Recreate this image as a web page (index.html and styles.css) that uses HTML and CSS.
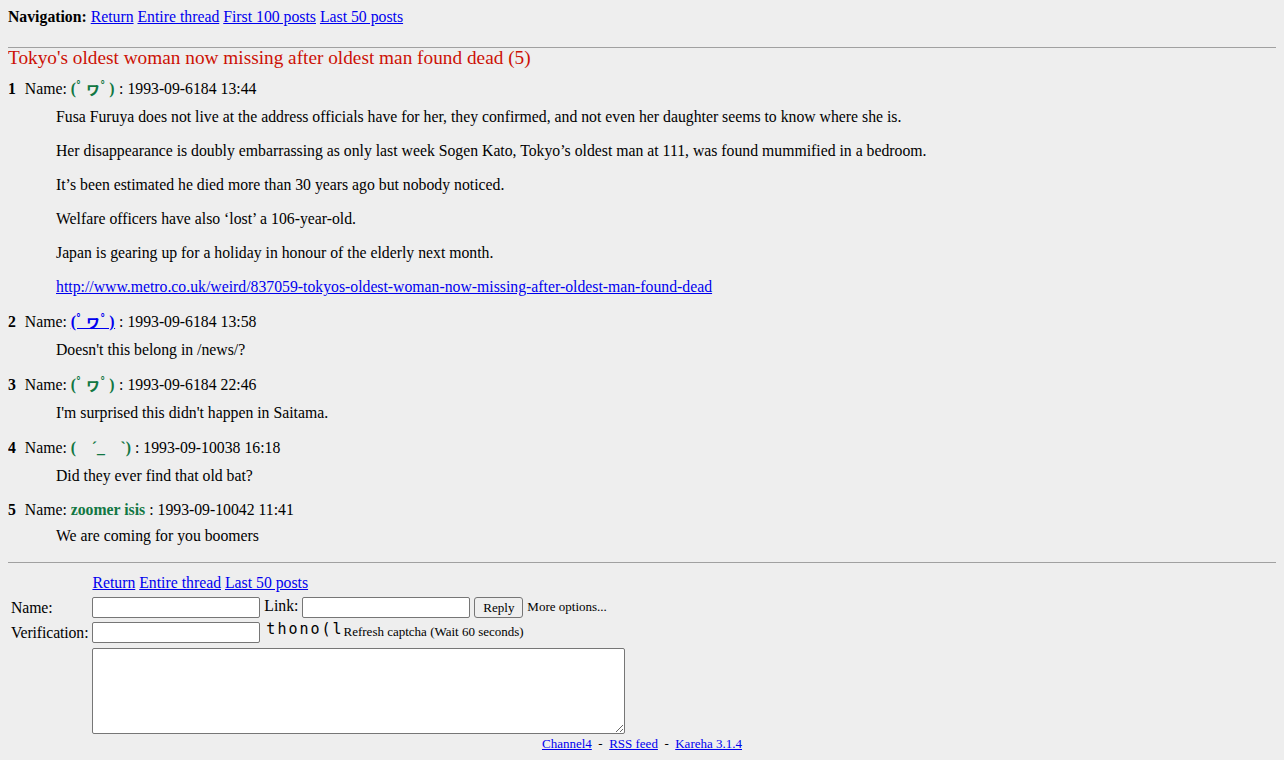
FILE: index.html
```html
<!DOCTYPE html>
<html lang="en">
<head>
    <meta charset="UTF-8">
    <title>Tokyo's oldest woman now missing after oldest man found dead</title>
    <link rel="stylesheet" href="styles.css">
</head>
<body>
    <div class="navigation">
        <strong>Navigation:</strong>
        <a href="#">Return</a>
        <a href="#">Entire thread</a>
        <a href="#">First 100 posts</a>
        <a href="#">Last 50 posts</a>
    </div>

    <hr>

    <div class="thread">
        <h2>Tokyo's oldest woman now missing after oldest man found dead <span class="replies">(5)</span></h2>

        <div class="reply">
            <h3><span class="replynum">1</span> Name: <span class="postername kao">(ﾟヮﾟ)</span> : 1993-09-6184 13:44</h3>
            <div class="replytext">
                <p>Fusa Furuya does not live at the address officials have for her, they confirmed, and not even her daughter seems to know where she is.</p>
                <p>Her disappearance is doubly embarrassing as only last week Sogen Kato, Tokyo’s oldest man at 111, was found mummified in a bedroom.</p>
                <p>It’s been estimated he died more than 30 years ago but nobody noticed.</p>
                <p>Welfare officers have also ‘lost’ a 106-year-old.</p>
                <p>Japan is gearing up for a holiday in honour of the elderly next month.</p>
                <p><a href="#">http://www.metro.co.uk/weird/837059-tokyos-oldest-woman-now-missing-after-oldest-man-found-dead</a></p>
            </div>
        </div>

        <div class="reply">
            <h3><span class="replynum">2</span> Name: <a class="postername linked kao" href="#">(ﾟヮﾟ)</a> : 1993-09-6184 13:58</h3>
            <div class="replytext">
                <p>Doesn't this belong in /news/?</p>
            </div>
        </div>

        <div class="reply">
            <h3><span class="replynum">3</span> Name: <span class="postername kao">(ﾟヮﾟ)</span> : 1993-09-6184 22:46</h3>
            <div class="replytext">
                <p>I'm surprised this didn't happen in Saitama.</p>
            </div>
        </div>

        <div class="reply">
            <h3><span class="replynum">4</span> Name: <span class="postername">(　´_　`)</span> : 1993-09-10038 16:18</h3>
            <div class="replytext">
                <p>Did they ever find that old bat?</p>
            </div>
        </div>

        <div class="reply last">
            <h3><span class="replynum">5</span> Name: <span class="postername">zoomer isis</span> : 1993-09-10042 11:41</h3>
            <div class="replytext">
                <p>We are coming for you boomers</p>
            </div>
        </div>
    </div>

    <hr>

    <form class="postform">
        <table>
            <tr class="links">
                <td></td>
                <td>
                    <a href="#">Return</a>
                    <a href="#">Entire thread</a>
                    <a href="#">Last 50 posts</a>
                </td>
            </tr>
            <tr>
                <td class="label">Name:</td>
                <td>
                    <input type="text" class="field">
                    Link:
                    <input type="text" class="field">
                    <input type="button" class="submit" value="Reply">
                    <small>More options...</small>
                </td>
            </tr>
            <tr>
                <td class="label">Verification:</td>
                <td>
                    <input type="text" class="field">
                    <span class="captcha">thono(l</span>
                    <small>Refresh captcha (Wait 60 seconds)</small>
                </td>
            </tr>
            <tr class="textrow">
                <td></td>
                <td><textarea class="comment"></textarea></td>
            </tr>
        </table>
    </form>

    <div class="footer">
        <a href="#">Channel4</a> &nbsp;-&nbsp;
        <a href="#">RSS feed</a> &nbsp;-&nbsp;
        <a href="#">Kareha 3.1.4</a>
    </div>
</body>
</html>
```

FILE: styles.css
```css
body {
    margin: 8px;
    background: #eeeeee;
    color: #000000;
    font-family: "Liberation Serif", "Noto Sans CJK JP", serif;
    font-size: 15.75px;
    line-height: 18px;
}

a {
    color: #0000ee;
}

hr {
    height: 0;
    border: 0;
    border-top: 1px solid #a0a0a0;
    margin: 21px 0 0 0;
}

.thread h2 {
    color: #cc1105;
    font-size: 19.3px;
    font-weight: normal;
    line-height: 20px;
    margin: 0 0 12px 0;
}

.reply {
    margin-bottom: 17px;
}

.reply.last {
    margin-top: -1px;
    margin-bottom: 0;
}

.reply h3 {
    font-size: 15.75px;
    font-weight: normal;
    margin: 0 0 10px 0;
}

.reply.last h3 {
    margin-bottom: 8px;
}

.replynum {
    font-weight: bold;
    margin-right: 5px;
}

.postername {
    color: #117743;
    font-weight: bold;
}

.postername.linked {
    color: #0000ee;
}

.kao {
    letter-spacing: 0.6px;
}

.replytext {
    margin-left: 48px;
}

.replytext p {
    margin: 0 0 16px 0;
}

.replytext p:last-child {
    margin-bottom: 0;
}

.thread + hr {
    margin-top: 17px;
}

.postform table {
    margin-top: 8px;
    border-spacing: 2px;
}

.postform td {
    padding: 1px;
    vertical-align: middle;
}

.postform .links td {
    padding-bottom: 2px;
}

.postform .textrow td {
    padding-top: 2px;
}

.postform .label {
    letter-spacing: -0.1px;
}

.postform small {
    font-size: 13px;
}

.field {
    box-sizing: border-box;
    width: 168px;
    height: 21px;
    font-size: 13px;
    border: 1px solid #767676;
    border-radius: 2px;
    background: #ffffff;
    vertical-align: middle;
}

.submit {
    font-family: "Liberation Serif", serif;
    font-size: 13px;
    height: 21px;
    padding: 0 8px;
    background: #efefef;
    border: 1px solid #767676;
    border-radius: 3px;
    vertical-align: middle;
}

.captcha {
    display: inline-block;
    font-family: "DejaVu Sans Mono", monospace;
    font-size: 15px;
    letter-spacing: 2px;
    margin-left: 2px;
    margin-right: -4px;
    vertical-align: top;
    line-height: 14px;
}

.comment {
    box-sizing: border-box;
    width: 533px;
    height: 86px;
    border: 1px solid #767676;
    border-radius: 2px;
    background: #ffffff;
    display: block;
}

.footer {
    text-align: center;
    font-size: 13px;
    line-height: 16px;
    margin-top: -1px;
}
```
